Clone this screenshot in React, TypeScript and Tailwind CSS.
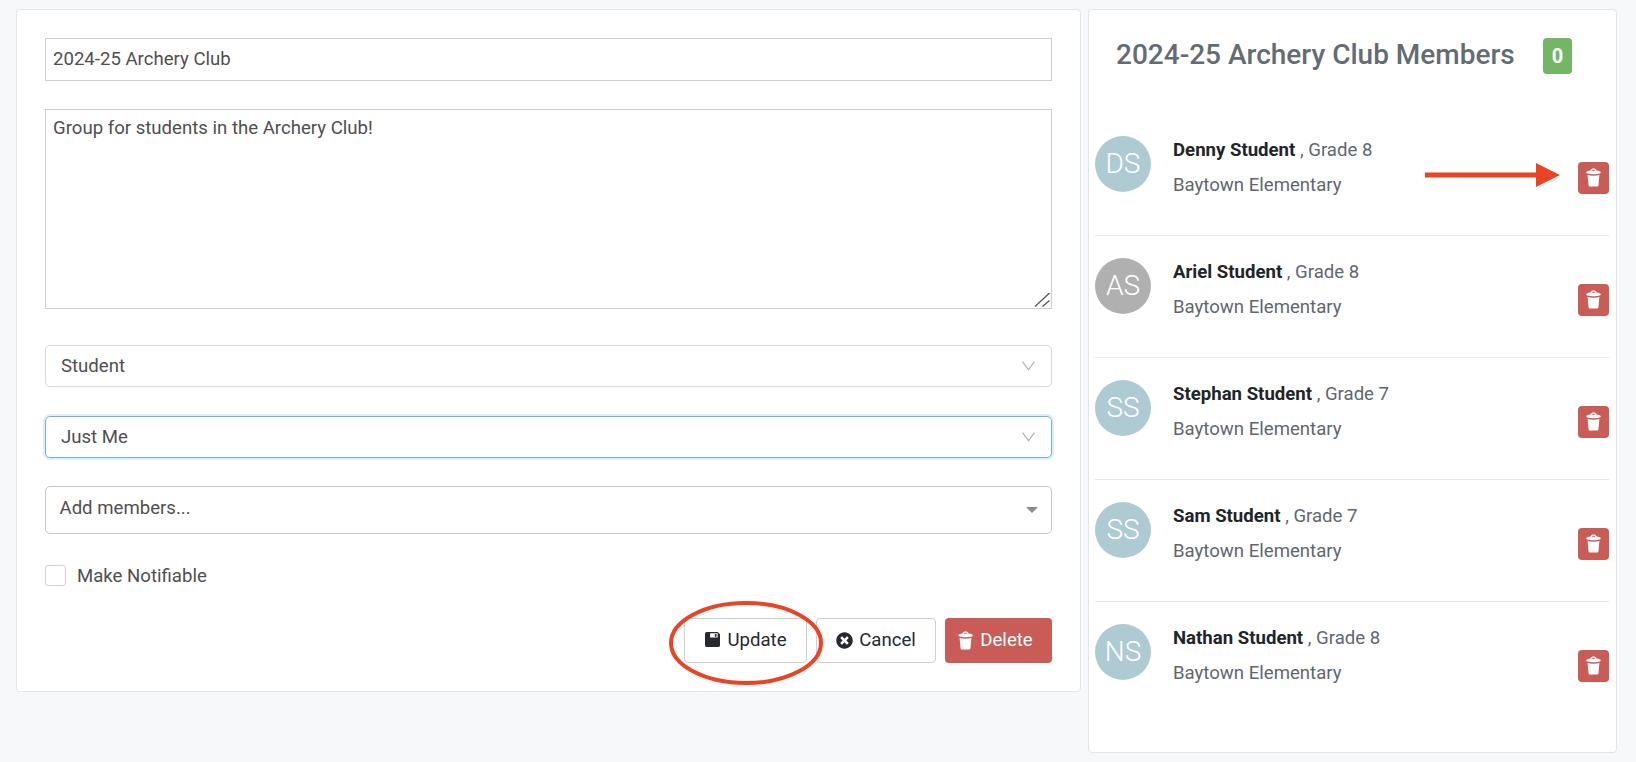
import { FaTimesCircle } from 'react-icons/fa'

const members = [
  { initials: 'DS', name: 'Denny Student', grade: 'Grade 8', color: 'bg-[#aecbd4]' },
  { initials: 'AS', name: 'Ariel Student', grade: 'Grade 8', color: 'bg-[#b0b0b0]' },
  { initials: 'SS', name: 'Stephan Student', grade: 'Grade 7', color: 'bg-[#aecbd4]' },
  { initials: 'SS', name: 'Sam Student', grade: 'Grade 7', color: 'bg-[#aecbd4]' },
  { initials: 'NS', name: 'Nathan Student', grade: 'Grade 8', color: 'bg-[#aecbd4]' },
]

const TrashIcon = ({ className }: { className: string }) => (
  <svg className={className} viewBox="0 0 16 20" fill="currentColor">
    <path fillRule="evenodd" d="M8 .4c1.600 0 2.900.7 3.300 2.200 2.700.3 4.500 1 4.500 2 0 1.100-3.500 1.800-7.800 1.800S.2 5.700.2 4.600c0-1 1.800-1.700 4.500-2C5.100 1.100 6.400.4 8 .4zM8 1.700c-1 0-1.700.4-2 1.100.7-.1 1.300-.1 2-.1s1.300 0 2 .1c-.3-.7-1-1.100-2-1.100z" />
    <path d="M1.700 7.200C3.500 7.800 5.700 8 8 8s4.500-.2 6.300-.8l-1 10.800c-.1 1-.9 1.700-1.900 1.700H4.600c-1 0-1.800-.7-1.900-1.700z" />
  </svg>
)

const SaveIcon = ({ className }: { className: string }) => (
  <svg className={className} viewBox="0 0 16 16" fill="currentColor">
    <path fillRule="evenodd" d="M2 0h11.500L16 2.500V14a2 2 0 0 1-2 2H2a2 2 0 0 1-2-2V2a2 2 0 0 1 2-2zm3.500 1.200v4.600h8V1.200zm5 .8h1.800v3h-1.800z" />
  </svg>
)

const Chevron = () => (
  <svg className="w-[13px] h-[10px] text-[#b5b5b5]" viewBox="0 0 13 10" fill="none" stroke="currentColor" strokeWidth="1.200">
    <path d="M.5.7l6 8 6-8" />
  </svg>
)

const App = () => {
  return (
    <div className="relative w-[1636px] h-[762px] overflow-hidden bg-[#f7f8fa] font-[Roboto,sans-serif] text-[18.6px] text-[#4f4f4f] flex items-start gap-[7px] pt-[9px] pl-[16px]">
      <div className="w-[1065px] h-[683px] bg-white border border-[#e3e5e8] rounded-[4px] pt-[28px] px-[28px]">
        <input
          readOnly
          value="2024-25 Archery Club"
          className="block w-full h-[43px] border border-[#cfcfcf] px-[7px] pb-[2px] outline-none"
        />
        <div className="relative mt-[28px]">
          <textarea
            readOnly
            value="Group for students in the Archery Club!"
            className="block w-full h-[200px] border border-[#cfcfcf] px-[7px] py-[5px] outline-none resize-none"
          />
          <svg className="absolute right-[2px] bottom-[2px] w-[16px] h-[15px] text-[#555555]" viewBox="0 0 16 15" fill="none" stroke="currentColor" strokeWidth="1.300">
            <path d="M1 14.500L15.500 1M8.500 14.500L15.500 8.500" />
          </svg>
        </div>
        <div className="h-[42px] mt-[36px] flex items-center justify-between border border-[#d9d9d9] rounded-[5px] pl-[15px] pr-[16px]">
          <span className="pt-[2px]">Student</span>
          <Chevron />
        </div>
        <div className="h-[42px] mt-[29px] flex items-center justify-between border border-[#6fb0dc] rounded-[5px] pl-[15px] pr-[16px] shadow-[0_0_0_2px_#e1edf8]">
          <span className="pt-[2px]">Just Me</span>
          <Chevron />
        </div>
        <div className="h-[48px] mt-[28px] flex items-center justify-between border border-[#c8c8c8] rounded-[5px] pl-[13.5px] pr-[13px]">
          <span className="pb-[2px]">Add members...</span>
          <span className="w-0 h-0 border-x-[6px] border-x-transparent border-t-[6px] border-t-[#8a8a8a]" />
        </div>
        <div className="h-[26px] mt-[28px] flex items-center gap-[11px]">
          <span className="w-[21px] h-[21px] border border-[#d2d2d2] rounded-[3px]" />
          <span className="pt-[3px]">Make Notifiable</span>
        </div>
        <div className="mt-[30px] flex justify-end gap-[9px] text-[#262a2e]">
          <button className="w-[123px] h-[45px] flex items-center justify-center gap-[7px] border border-[#cfcfcf] rounded-[4px] pt-[1px] pl-[1px]">
            <SaveIcon className="w-[15px] h-[15px] mb-[3px]" />
            Update
          </button>
          <button className="w-[120px] h-[45px] flex items-center justify-center gap-[6px] border border-[#cfcfcf] rounded-[4px] pt-[1px]">
            <FaTimesCircle className="w-[17px] h-[17px] mb-[2px]" />
            Cancel
          </button>
          <button className="w-[107px] h-[45px] flex items-center justify-center gap-[7px] bg-[#c95c56] text-white rounded-[4px] pr-[6px] pt-[1px]">
            <TrashIcon className="w-[15px] h-[19px] mb-[2px]" />
            Delete
          </button>
        </div>
      </div>

      <div className="w-[529px] h-[744px] bg-white border border-[#e3e5e8] rounded-[4px] pl-[6px] pr-[7px]">
        <div className="h-[104px] flex items-start pt-[28px] pl-[21px]">
          <h2 className="w-[427px] mt-[1px] text-[28px] leading-[32px] font-medium text-[#646c73]">2024-25 Archery Club Members</h2>
          <span className="w-[29px] h-[36px] flex items-center justify-center bg-[#74b566] text-white text-[20px] font-bold rounded-[4px]">0</span>
        </div>
        {members.map((m, i) => (
          <div key={m.name} className={`h-[122.1px] flex items-start ${i < 4 ? 'border-b border-[#e6e7e9]' : ''}`}>
            <div className={`w-[56px] h-[56px] mt-[22px] shrink-0 rounded-full flex items-center justify-center text-white text-[28px] font-light ${m.color}`}>
              {m.initials}
            </div>
            <div className="ml-[22px] mt-[24px] flex-1">
              <div className="h-[24px] leading-[24px] text-[#5f676e]">
                <span className="font-bold text-[#212529]">{m.name}</span> , {m.grade}
              </div>
              <div className="mt-[11px] h-[24px] leading-[24px] text-[#5f676e]">Baytown Elementary</div>
            </div>
            <button className="w-[31px] h-[32px] mt-[47.5px] shrink-0 flex items-center justify-center bg-[#c95c56] text-white rounded-[4px]">
              <TrashIcon className="w-[15px] h-[19px]" />
            </button>
          </div>
        ))}
      </div>

      <svg className="absolute left-[668px] top-[600px] w-[156px] h-[86px]" viewBox="0 0 156 86" fill="none">
        <ellipse cx="78" cy="43" rx="75" ry="40" stroke="#ea4425" strokeWidth="4" />
      </svg>
      <svg className="absolute left-[1425px] top-[161px] w-[135px] h-[28px]" viewBox="0 0 135 28" fill="none">
        <path d="M0 11.500h111V2l24 12-24 12V16.500H0z" fill="#ea4425" />
      </svg>
    </div>
  )
}

export default App
